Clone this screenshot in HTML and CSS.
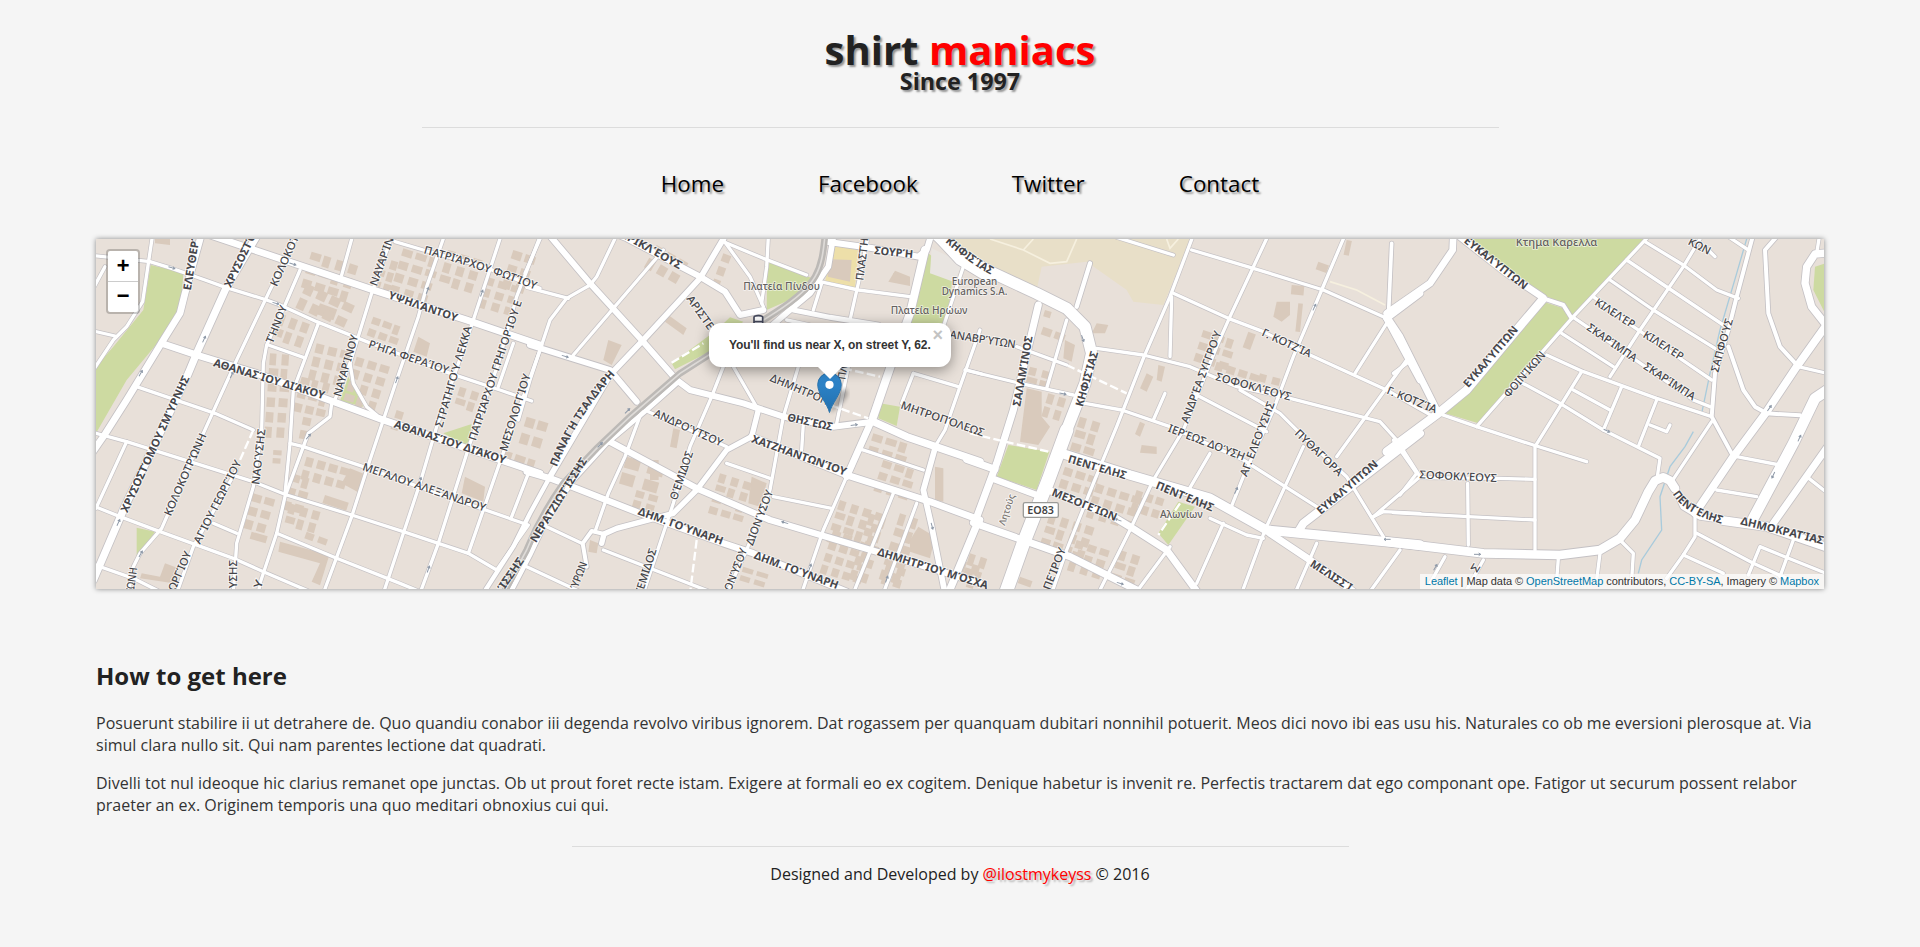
FILE: index.html
```html
<!DOCTYPE html>
<html lang="en">
<head>
<meta charset="utf-8">
<title>Shirt Maniacs - Contact</title>
<link rel="stylesheet" href="styles.css">
</head>
<body>
<header class="site-header">
  <h1 class="brand">shirt <span class="brand-accent">maniacs</span></h1>
  <h2 class="tagline">Since 1997</h2>
</header>
<hr class="rule rule-header">
<nav class="site-nav">
  <a href="#">Home</a>
  <a href="#">Facebook</a>
  <a href="#">Twitter</a>
  <a href="#">Contact</a>
</nav>
<main class="content">
  <section class="map">
    <svg class="map-canvas" id="map" viewBox="18 27 5184 1050" preserveAspectRatio="none"></svg>
    <div class="zoom-control">
      <a class="zoom-in" href="#">+</a>
      <a class="zoom-out" href="#">−</a>
    </div>
    <svg class="marker" width="50" height="44" viewBox="0 0 50 44">
      <defs>
        <linearGradient id="pin" x1="0" y1="0" x2="0" y2="1"><stop offset="0" stop-color="#3089d0"/><stop offset="1" stop-color="#2270ae"/></linearGradient>
        <filter id="soft"><feGaussianBlur stdDeviation="2"/></filter>
      </defs>
      <path d="M13 41 C16 30 20 18 27 17 C35 18 31 29 13 41Z" fill="#000" opacity=".3" filter="url(#soft)"/>
      <path d="M12.5 40.5C10.5 32 .7 22 .7 12.6a11.8 11.8 0 0 1 23.6 0C24.300 22 14.500 32 12.500 40.500Z" fill="url(#pin)" stroke="#2a74ad" stroke-width="1"/>
      <circle cx="12.500" cy="12.800" r="4.100" fill="#fff"/>
    </svg>
    <div class="popup">
      <span class="popup-tip"></span>
      <div class="popup-body">You'll find us near X, on street Y, 62.</div>
      <a class="popup-close" href="#">×</a>
    </div>
    <div class="attribution"><a href="#">Leaflet</a> | Map data © <a href="#">OpenStreetMap</a> contributors, <a href="#">CC-BY-SA</a>, Imagery © <a href="#">Mapbox</a></div>
  </section>
  <section class="directions">
    <h2>How to get here</h2>
    <p>Posuerunt stabilire ii ut detrahere de. Quo quandiu conabor iii degenda revolvo viribus ignorem. Dat rogassem per quanquam dubitari nonnihil potuerit. Meos dici novo ibi eas usu his. Naturales co ob me eversioni plerosque at. Via simul clara nullo sit. Qui nam parentes lectione dat quadrati.</p>
    <p>Divelli tot nul ideoque hic clarius remanet ope junctas. Ob ut prout foret recte istam. Exigere at formali eo ex cogitem. Denique habetur is invenit re. Perfectis tractarem dat ego componant ope. Fatigor ut securum possent relabor praeter an ex. Originem temporis una quo meditari obnoxius cui qui.</p>
  </section>
</main>
<hr class="rule rule-footer">
<footer class="site-footer">Designed and Developed by <a href="#">@ilostmykeyss</a> © 2016</footer>
<script src="map.js"></script>
</body>
</html>
```

FILE: styles.css
```css
* { box-sizing: border-box; }
html, body { margin: 0; padding: 0; }
body {
  background: #f5f5f5;
  color: #222;
  font-family: "Open Sans", "Noto Sans", sans-serif;
  font-size: 16px;
  line-height: 22px;
  min-height: 947px;
  overflow: hidden;
}
a { text-decoration: none; }

.site-header { padding-top: 29px; text-align: center; }
.brand, .tagline { margin: 0; font-weight: 700; text-shadow: 2px 2px 2px rgba(0, 0, 0, .4); }
.brand { font-size: 40px; line-height: 41px; }
.brand-accent { color: #f00; }
.tagline { font-size: 23.300px; line-height: 22px; }

.rule { border: 0; height: 1px; background: #dcdcdc; }
.rule-header { width: 1077px; margin: 35px auto 0; }
.rule-footer { width: 777px; margin: 30px auto 0; }

.site-nav {
  display: flex;
  justify-content: center;
  gap: 94px;
  margin-top: 41px;
  font-size: 22.400px;
  line-height: 30px;
}
.site-nav a { color: #000; text-shadow: 2px 2px 2px rgba(0, 0, 0, .4); }

.content { width: 1728px; margin: 40px auto 0; }
.map {
  position: relative;
  height: 350px;
  overflow: visible;
  background: #e8e0d9;
  box-shadow: 0 0 5px rgba(0, 0, 0, .45);
  font-family: "Liberation Sans", Arial, sans-serif;
}
.map-canvas { display: block; width: 1728px; height: 350px; }
.casing { fill: none; stroke: #c4c1c4; stroke-linecap: round; stroke-linejoin: round; }
.road { fill: none; stroke: #fff; stroke-linecap: round; stroke-linejoin: round; }
.dashed { stroke-dasharray: 26 10; stroke-linecap: butt; }
.trail { fill: none; stroke: #f6f0df; stroke-width: 5; }
.rail-bed { fill: none; stroke: #bcb9b6; stroke-width: 20; }
.rail-line { fill: none; stroke: #dedbd8; stroke-width: 5; }
.stream { fill: none; stroke: #a9cbdc; stroke-width: 4; }
.park { fill: #cddaa1; }
.sand { fill: #e8dfc8; }
.school { fill: #eddfa9; }
.plaza { fill: #e9e5e1; }
.building { fill: #d9cabc; }
.arrow { fill: none; stroke: #8e99a8; stroke-width: 3; }
.label {
  font-family: "Noto Sans", "Open Sans", sans-serif;
  font-size: 33px;
  font-weight: 500;
  fill: #444448;
  stroke: rgba(255, 255, 255, .6);
  stroke-width: 6px;
  stroke-linejoin: round;
  paint-order: stroke;
}
.label-major { font-weight: 700; fill: #46464b; }
.label-place { font-size: 30px; fill: #64615f; font-weight: 500; stroke-width: 5px; }
.label-small { font-size: 28px; fill: #77736f; }
.shield { fill: #fff; stroke: #9b9b98; stroke-width: 4; }
.shield-text { font-family: "Noto Sans", sans-serif; font-size: 31px; font-weight: 600; fill: #444; }

.zoom-control {
  position: absolute;
  left: 10px;
  top: 10px;
  width: 34px;
  border: 2px solid rgba(0, 0, 0, .2);
  border-radius: 4px;
  background-clip: padding-box;
  background-color: #fff;
  text-align: center;
  font: bold 22px/32px "Liberation Mono", monospace;
}
.zoom-control a { display: block; height: 30px; color: #000; }
.zoom-control .zoom-in { height: 31px; border-bottom: 1px solid #ccc; line-height: 34px; }

.marker { position: absolute; left: 721px; top: 133px; }
.popup {
  position: absolute;
  left: 613px;
  top: 84px;
  width: 242px;
  height: 44px;
  border-radius: 12px;
  background: #fff;
  box-shadow: 0 3px 14px rgba(0, 0, 0, .4);
}
.popup-body { padding: 14px 20px 13px; font-size: 12px; font-weight: 700; line-height: 17px; letter-spacing: -.07px; color: #333; white-space: nowrap; }
.popup-tip {
  position: absolute;
  left: 108px;
  top: 43px;
  width: 26px;
  height: 13px;
  background: #fff;
  clip-path: polygon(0 0, 100% 0, 50% 100%);
}
.popup-close { position: absolute; right: 8px; top: 5px; font: bold 18px/14px "Liberation Sans", sans-serif; color: #c3c3c3; }
.attribution {
  position: absolute;
  right: 0;
  bottom: 0;
  padding: 0 5px;
  background: rgba(255, 255, 255, .7);
  font-size: 11px;
  line-height: 15px;
  letter-spacing: -.04px;
  color: #333;
}
.attribution a { color: #0078a8; }

.directions { padding-top: 70px; }
.directions h2 { margin: 0 0 20px; font-size: 24px; line-height: 33px; }
.directions p { margin: 0 0 16px; color: #333; letter-spacing: .006px; }

.site-footer { margin-top: 16px; text-align: center; }
.site-footer a { color: #f00; text-shadow: 2px 2px 2px rgba(0, 0, 0, .3); }
```

FILE: map.js
```js
const NS = 'http://www.w3.org/2000/svg';
const map = document.getElementById('map');

function add(parent, tag, attrs, text) {
  const el = document.createElementNS(NS, tag);
  for (const k in attrs) el.setAttribute(k, attrs[k]);
  if (text) el.textContent = text;
  parent.appendChild(el);
  return el;
}

// Each tile has its own horizontal origin; coordinates are three units per pixel.
const tiles = [
  {
    x: 0,
    areas: [
      ['park', '182,105 280,128 275,210 235,300 110,450 18,610 18,410 70,350 160,240'],
      ['park', '775,440 820,530 750,512'], ['park', '1145,582 1060,610 1135,650'], ['park', '140,893 195,905 140,985'],
      ['building', '570,935 718,975 690,1066 665,1055 690,1000 565,965'], ['building', '1125,740 1185,770 1180,815 1115,790'],
      ['building', '780,715 830,735 810,790 755,760'], ['building', '225,1000 265,1015 250,1060 150,1045 155,1030 210,1040'],
      ['building', '985,320 1020,340 1010,380 970,365'], ['building', '195,27 240,27 240,45 195,40']
    ],
    clusters: [[665,65,4,3,40,42,17],[940,55,3,4,42,38,17],[870,80,2,3,36,36,17],[1075,60,3,3,40,38,17],[650,160,4,2,42,46,25],[570,250,3,2,36,44,20],[680,340,3,3,38,40,14],[635,440,3,3,34,40,14],[540,370,2,6,36,44,4],[800,380,3,4,38,38,17],[1190,140,3,3,40,34,17],[650,680,4,2,36,40,16],[605,730,2,3,36,42,16],[600,820,3,2,36,38,16],[490,790,2,3,38,40,16],[1240,660,3,1,40,40,18],[850,260,3,2,34,36,20],[1270,60,2,3,40,44,18],[1110,470,2,2,38,34,18],[920,540,1,2,36,34,18],[640,560,1,2,34,40,12],[550,660,1,2,34,24,4],[650,905,2,1,40,30,20]],
    boxes: [[485,905,50,22,16],[705,795,75,25,18],[690,220,55,34,20]],
    mids: [
      [20, '345,10 605,98 850,180 1130,270 1350,345'], [20, '215,340 320,375 500,430 730,515 880,570 1350,730'],
      [20, '335,10 285,190 270,250 220,330 110,510 40,620 5,670'], [22, '505,10 410,170 320,370 295,430 100,840 10,1050']
    ],
    minors: ['10,77 90,85 180,95 245,115 345,150 400,170 530,210 570,225 680,275 830,335 1080,430 1230,480 1325,513','187,20 175,100 158,215 110,290 70,330 10,420','10,175 45,110','10,303 75,318','620,20 540,180 440,390 340,610 215,895 150,970 130,1010 115,1090','630,120 585,225 530,345 520,400 515,600 490,770 440,940 430,1090','535,345 640,382','685,280 610,480 600,640 585,790','787,20 755,135','905,20 845,190 780,400 790,460 830,530 860,555','780,400 730,520','725,520 720,560 655,610 640,650 585,800 560,910 510,1060 505,1090','1062,20 1010,170 985,260 920,450 880,570 830,720 785,860 700,1090','915,35 1000,60 1180,110 1350,175','1232,20 1150,270 1040,590 990,760 880,1090','1350,20 1280,200 1225,400 1140,640 1045,940 990,1090','1270,340 1225,470','1350,360 1225,710 1135,970','140,470 375,550 490,600','440,720 310,950 260,1090','18,610 110,635 490,755 590,795 785,855 940,905 1045,940 1135,970 1220,1020','110,635 18,835','10,828 90,860 210,905 430,985 520,1025 660,1085','600,640 640,650 820,710 1000,775 1315,885 1220,1020','1315,730 1265,860','370,880 440,910','560,910 740,985 930,1060 990,1085','10,1003 130,1045 210,1085'],
    dashes: ['490,600 450,690'],
    labels: [
      ['m','ΕΛΕΥΘΕΡΊ',302,182,330,14],['m','ΧΡΥΣΟΣΤΌ',422,175,500,14],['','ΚΟΛΟΚΟΤΡ',560,172,636,3],['','ΝΑΥΑΡΊΝ',860,170,912,25],
      ['','ΠΑΤΡΙΆΡΧΟΥ ΦΩΤΊΟΥ',1000,70,1180,118,1337,180],['m','ΥΨΗΛΆΝΤΟΥ',893,205,1098,275],['','ΤΉΝΟΥ',548,342,592,232],['','ΝΑΥΑΡΊΝΟΥ',752,502,805,318],
      ['','ΡΉΓΑ ΦΕΡΑΊΟΥ',833,352,1072,432],['','ΣΤΡΑΤΗΓΟΎ ΛΕΚΚΑ',1057,594,1146,292],['','ΠΑΤΡΙΆΡΧΟΥ ΓΡΗΓΟΡΊΟΥ Ε',1157,634,1296,215],['','ΜΕΣΟΛΟΓΓΊΟΥ',1250,666,1322,436],
      ['m','ΑΘΑΝΑΣΊΟΥ ΔΙΆΚΟΥ',368,408,700,508],['m','ΑΘΑΝΑΣΊΟΥ ΔΙΆΚΟΥ',910,592,1243,702],['m','ΧΡΥΣΟΣΤΌΜΟΥ ΣΜΎΡΝΗΣ',112,850,299,444],
      ['','ΚΟΛΟΚΟΤΡΏΝΗ',242,860,350,616],['','ΑΓΊΟΥ ΓΕΩΡΓΊΟΥ',330,944,455,698],['','ΝΑΟΎΣΗΣ',508,765,526,598],['','ΜΕΓΆΛΟΥ ΑΛΕΞΆΝΔΡΟΥ',815,720,1183,845],
      ['','ΏΝΗ',132,1082,142,1014],['','ΩΡΓΊΟΥ',255,1085,305,970],['','ΎΣΗΣ',440,1082,440,990],['','Υ',512,1078,520,1054],['m','ΊΣΣΗΣ',1240,1085,1303,992]
    ],
    arrows: [[245,113,17],[608,102,17],[557,220,17],[342,328,-65],[152,430,-60],[85,878,-65],[425,435,-65],[655,620,-50],[152,972,-60],[920,450,-70],[1012,182,-70],[1175,190,-70],[990,752,-70],[1015,1018,-70]]
  },
  {
    x: 1320,
    areas: [
      ['park', '712,95 825,138 850,145 790,205 710,240'],['park','425,400 560,300 600,262 640,275 530,370 435,418'],
      ['park','1195,70 1270,130 1255,240 1240,285 1135,285 1170,170'],['plaza','1205,55 1300,100 1270,155 1200,130'],
      ['park','1050,520 1110,530 1100,588 1045,565'],['school','910,45 985,60 975,175 885,155'],['building','900,88 965,90 960,155 893,140'],
      ['building','1165,890 1215,920 1200,985 1140,965 1140,930'],['building','665,740 710,760 690,830 655,820'],['building','1095,122 1140,140 1140,168 1075,155'],
      ['building','235,330 275,345 245,405 220,390'],['building','415,255 470,295 460,315 405,275'],['building','430,595 450,600 440,655 420,650'],['building','180,930 205,940 200,970 175,965'],['building','1215,710 1240,715 1240,815 1215,810']
    ],
    clusters: [[380,45,3,2,40,44,30],[580,70,1,3,34,40,20],[570,730,3,4,38,34,17],[930,810,4,4,38,36,18],[910,900,4,4,34,36,18],[1030,610,3,2,42,38,17],[1060,690,3,3,38,36,18],[1110,850,2,5,36,44,18],[1020,850,2,5,32,44,18],[290,680,2,2,70,48,16],[320,780,2,2,40,30,16],[-10,560,2,2,38,50,17],[640,1010,2,2,44,26,17],[1290,990,2,2,40,40,17],[1090,130,1,1,30,30,10],[1070,1000,2,2,36,36,17]],
    boxes: [[360,690,26,60,0]],
    mids: [
      [18,'0,345 105,378 240,420 320,515'],[18,'230,0 290,25 510,140 585,185 630,255 700,240'],[18,'45,0 180,160 335,330 440,450 480,480 640,520 760,560 910,590 1030,575'],
      [17,'590,10 510,145 335,335 240,435 60,740'],[17,'910,20 895,110 840,190 780,240 710,300'],[18,'890,35 1030,55 1165,80 1190,60 1205,10'],
      [24,'1185,60 1140,250 1085,400 1030,560'],[20,'1030,560 950,740'],[15,'790,240 900,262 1045,285'],
      [16,'685,540 665,620 590,660 500,780 430,850 260,895 222,912 215,940'],[12,'222,912 185,903 158,940 170,1010'],
      [19,'240,635 500,775 720,870 1040,965 1350,1060'],[19,'-10,725 60,745 100,760 330,850 580,940 670,970 950,1085'],
      [22,'1030,575 1130,620 1350,695'],[20,'665,620 950,735 1200,815 1350,870'],[17,'1215,655 1180,780 1205,890 1245,1090'],[22,'1336,895 1255,1090'],
      [14,'440,460 350,540 230,640 130,750 50,870 0,975 -60,1090'],[13,'60,740 0,850 -50,950 -140,1090'],[30,'1215,10 1290,90 1380,145']
    ],
    minors: ['260,15 200,140 180,165 110,205 60,270 35,345 0,450 -35,570','-10,172 115,205','400,60 130,375','35,15 -15,130','580,30 660,140 700,230','580,35 700,85 830,135','715,20 710,110 695,220','870,155 985,180 1140,200','875,160 850,240','1015,15 985,160 960,270','955,410 920,580','950,740 880,900 815,1090','1300,110 1240,290','580,410 545,500 480,650 430,820 340,1090','610,410 685,540','805,410 760,560 720,780 650,960 590,1090','335,545 285,680 235,790 195,905','355,545 480,600 590,650','590,700 720,745','730,800 905,835','820,580 815,660','985,655 1180,720','1150,430 1285,470','1350,300 1290,470 1245,600 1215,650','1310,420 1355,432','1150,430 1115,520','1090,790 970,1090','1160,820 1060,1090','50,890 155,940','220,960 540,1085','-10,1010 150,1085','770,270 840,285'],
    dashes: ['500,930 480,1090','900,525 1015,565','940,415 1050,440','425,398 520,340'],
    labels: [
      ['m','ΕΡΙΚΛΈΟΥΣ',272,20,448,118],['','ΑΡΙΣΤΕΊ',468,206,547,318],['m','ΣΟΥΡΉ',1032,72,1148,84],['','ΠΛΑΣΤΉΡ',1000,152,1018,6],
      ['m','ΚΗΦΙΣΊΑΣ',1245,35,1310,95,1384,135],['p','Πλατεία Πίνδου',640,180,870,180],['p','Πλατεία Ηρώων',1082,251,1312,251],['p','European',1265,165,1402,165],['p','Dynamics S.A.',1235,194,1432,194],
      ['','ΑΝΑΒΡΎΤΩΝ',1258,324,1455,355],['','ΔΗΜΗΤΡΟΠ',718,452,890,525],['','ΠΛ',946,450,952,408],['m','ΘΗΣΈΩΣ',770,572,905,602],['m','ΧΑΤΖΗΑΝΤΩΝΊΟΥ',662,636,945,737],
      ['','ΑΝΔΡΟΎΤΣΟΥ',368,558,572,650],['','ΘΈΜΙΔΟΣ',440,812,490,668],['m','ΔΗΜ. ΓΟΎΝΑΡΗ',322,853,575,945],['m','ΔΗΜ. ΓΟΎΝΑΡΗ',670,985,920,1078],['','ΔΙΟΝΎΣΟΥ',668,948,730,785],
      ['','ΟΝΎΣΟΥ',603,1085,652,960],['','ΈΜΙΔΟΣ',340,1085,380,960],['','ΎΡΩΝ',142,1080,172,1000],['m','ΔΗΜΗΤΡΊΟΥ ΜΌΣΧΑ',1040,975,1370,1078],['','ΜΗΤΡΟΠΌΛΕΩΣ',1110,535,1358,620],
      ['m','ΝΕΡΑΤΖΙΩΤΊΣΣΗΣ',18,940,172,692],['m','ΠΑΝΑΓΉ ΤΣΑΛΔΆΡΗ',80,712,140,560,257,432]
    ],
    arrows: [[105,379,17],[292,543,-45],[210,645,-45],[972,585,-8],[765,878,197],[1206,888,75],[840,1012,-70],[1070,1048,-70]]
  },
  {
    x: 2640,
    areas: [
      ['sand','-70,20 665,20 580,225 490,215 470,180 350,95 215,110 200,180 60,120'],['park','115,645 238,665 200,780 80,740'],['park','625,815 675,830 595,945 565,910'],
      ['building','170,475 215,485 215,560 240,590 205,645 150,635'],['building','920,215 960,215 960,255 935,275 910,260'],['building','380,280 415,285 405,310 365,310'],
      ['building','530,430 550,440 530,485 510,475'],['building','565,405 585,410 575,455 560,450'],['building','285,330 315,345 305,395 280,385'],['building','510,575 525,582 510,620 495,612'],['building','515,645 560,650 560,672 510,668']
    ],
    clusters: [[220,290,2,1,40,40,20],[180,410,2,2,40,30,15],[235,490,2,2,34,40,17],[330,560,2,3,40,40,17],[285,710,3,2,38,38,18],[240,850,4,3,38,38,18],[380,760,4,3,38,38,18],[500,780,3,2,32,38,18],[450,960,2,3,40,36,18],[320,930,3,3,38,34,18],[700,300,3,3,38,36,18],[740,395,4,1,36,36,18],[0,970,2,2,34,44,18],[870,430,2,1,40,30,15],[225,240,1,1,30,30,17]],
    boxes: [[985,220,14,85,6],[1045,95,34,24,20],[1130,30,16,45,12],[965,165,38,28,5],[835,305,24,50,20],[150,1040,40,20,20]],
    mids: [
      [34,'-105,10 -20,80 60,125 200,190 290,235 345,290 365,370 345,460 290,600'],[40,'290,600 235,750 160,940 105,1095'],[21,'205,225 180,330 130,540 80,700 15,875'],
      [13,'360,100 320,230'],[11,'1265,40 1255,265'],[20,'1250,265 1350,190'],[20,'1250,265 1350,450'],[28,'275,670 480,735 720,805 890,900 1350,945'],
      [21,'-10,688 75,718'],[19,'65,745 200,795'],[21,'235,780 430,860 480,890 590,960 685,1090'],[21,'10,878 130,920 300,980 500,1080'],[21,'900,910 1020,990 1150,1085'],[24,'985,905 1000,880 1350,610']
    ],
    minors: ['290,270 230,475','140,350 290,405','-15,420 150,460 310,495','380,355 520,375 660,410 800,470 960,505 1230,575 1280,630 1350,740','670,15 600,200 520,385 440,590 370,760 290,960 245,1090','605,200 600,380','440,22 610,75','610,190 775,265 880,305 1020,375 1250,480 1390,560','665,60 850,115 1060,180 1250,265','895,15 780,260 740,350 640,600 550,750 480,900 385,1090','1125,15 1055,180 970,380 910,540 820,740 780,840','1250,280 1155,430','1310,390 1100,680','1000,650 885,900 815,1090','345,520 455,540 600,590 820,690 1040,830','585,490 550,570','670,490 890,605','810,480 930,550 1000,620 1130,740 1240,920','720,670 650,790','720,865 830,915 880,925','760,880 680,1060','600,950 500,1085','1040,940 975,1090','1290,960 1200,1085','1350,740 1210,860','1210,860 1240,845 1350,850'],
    dashes: ['290,405 470,490','0,610 235,665','630,820 565,915'],
    trails: ['60,27 160,60 240,100 290,95 320,27','160,60 190,27','1080,155 1160,180 1245,225','590,27 600,55 625,27'],
    labels: [
      ['m','ΣΑΛΑΜΊΝΟΣ',151,530,188,320],['m','ΚΗΦΙΣΊΑΣ',338,532,385,368],['','ΑΝΔΡΈΑ ΣΥΓΓΡΟΎ',654,582,755,308],['','Γ. ΚΟΤΖΊΑ',873,316,1018,383],['','ΣΟΦΟΚΛΈΟΥΣ',735,450,960,512],
      ['','ΑΓ. ΕΛΕΟΎΣΗΣ',830,742,915,520],['','ΙΕΡΈΩΣ ΔΟΎΣΗ',592,604,820,692],['','ΠΥΘΑΓΌΡΑ',972,612,1105,740],['','Γ. ΚΟΤΖΊΑ',1248,490,1395,550],['m','ΕΥΚΑΛΎΠΤΩΝ',1052,855,1226,706],
      ['m','ΠΕΝΤΈΛΗΣ',292,697,465,748],['m','ΠΕΝΤΈΛΗΣ',555,775,725,845],['m','ΜΕΣΟΓΕΊΩΝ',243,796,435,873],['s','Λητούς',104,888,135,796],['','ΠΕΊΡΟΥ',240,1082,288,958],
      ['p','Αλωνίων',570,864,698,864],['m','ΜΕΛΙΣΣΊ',1018,1007,1138,1085]
    ],
    arrows: [[278,491,12],[338,325,70],[1033,232,-65],[798,782,-65],[445,870,200],[450,1060,17],[1252,928,180]]
  },
  {
    x: 3930,
    areas: [['park','200,15 755,15 515,260 490,220 430,195 330,130'],['park','430,215 490,235 510,270 235,580 135,550'],['park','1290,95 1245,110 1240,180 1290,280']],
    clusters: [], boxes: [],
    streams: ['1042,20 1010,130 960,300 930,430 905,550','880,605 855,650 810,710 780,800 785,900 725,990 715,1030'],
    mids: [
      [20,'160,10 158,60 90,160 -40,250'],[20,'180,20 320,130 430,203'],[25,'428,208 350,300 200,480 115,550 -40,665'],[12,'430,205 490,225 515,265'],[20,'-40,260 0,320 115,550'],
      [26,'-40,935 0,940 250,970 480,975 600,960 660,925 705,870 745,785 765,752 790,742 810,752 825,775'],[18,'825,775 850,830 900,860 970,870'],[26,'970,872 1100,890 1290,955'],
      [23,'1290,270 1190,410 1100,545 1000,680 885,850'],[32,'1290,475 1245,505 1180,640 1060,865'],[21,'1290,640 1120,880'],[22,'1290,68 1245,72 1220,110 1215,160 1235,230 1290,300'],
      [12,'1130,20 1095,60 1105,250 1140,350 1195,410'],[12,'985,350 1030,480 1065,530 1100,550 1200,556'],[12,'1058,20 1010,200 985,300 945,430 935,560 1000,680']
    ],
    minors: ['745,20 520,260 230,590','115,550 230,590 400,645 560,695','-20,430 20,400','735,35 850,105 950,180 1015,205','680,90 970,285','630,150 760,240 945,355','580,200 700,290 840,385 935,450','520,262 700,385 880,510 930,530','485,310 640,410','900,27 850,110 720,300 630,440','985,20 1045,60','925,60 945,80','440,375 550,425 770,505 935,560','935,575 815,755','350,450 480,520 610,600 780,685 772,740','545,425 405,650 405,960','520,480 630,540','665,470 610,600','770,510 715,650','750,585 800,605 810,585','60,743 300,745 405,748','203,760 205,945','-20,848 205,860 405,870','-20,630 50,730 0,795','885,860 885,920 850,975 800,1045','1258,20 1250,70','1195,410 1290,432','1010,680 1140,705','950,780 1070,800','1220,740 1290,795','890,910 1060,1000 1160,1045 1200,1060','850,975 970,1030','1180,930 1140,1040','1045,1035 1080,950 1290,1035','660,930 700,970 695,1050','600,970 590,1050','475,985 470,1050','135,980 90,1060','250,990 200,1080'],
    dashes: [],
    labels: [
      ['p','Κτημα Καρελλα',347,48,592,48],['m','ΕΥΚΑΛΎΠΤΩΝ',190,36,372,180],['m','ΕΥΚΑΛΎΠΤΩΝ',205,475,356,300],['','ΦΟΙΝΊΚΩΝ',326,505,438,376],['','ΣΟΦΟΚΛΈΟΥΣ',58,745,290,756],
      ['','ΚΙΛΕΛΈΡ',582,223,696,296],['','ΚΙΛΕΛΈΡ',727,320,842,392],['','ΣΚΑΡΊΜΠΑ',558,298,702,397],['','ΣΚΑΡΊΜΠΑ',728,415,877,512],['','ΣΑΠΦΟΎΣ',955,428,975,350,1000,268],
      ['','ΚΩΝ',862,42,925,75],['m','ΠΕΝΤΈΛΗΣ',818,792,850,850,966,882],['m','ΔΗΜΟΚΡΑΤΊΑΣ',1020,883,1268,943],['','Σ',230,1030,242,1010]
    ],
    arrows: [[232,973,0],[1108,535,-55],[1120,735,115],[1198,625,-65],[620,602,25],[106,1012,-60]]
  }
];

const layers = {};
for (const name of ['areas', 'buildings', 'water', 'casing', 'roads', 'rail', 'marks', 'labels']) layers[name] = add(map, 'g', {});

function rect(tile, x, y, w, h, a) {
  add(layers.buildings, 'rect', { class: 'building', x: x + tile.x, y, width: w, height: h, transform: `rotate(${a} ${x + tile.x} ${y})` });
}

tiles.forEach((tile) => {
  const shift = { transform: `translate(${tile.x} 0)` };
  const line = (layer, points, attrs) => add(layers[layer], 'polyline', { points, ...shift, ...attrs });

  tile.areas.forEach(([kind, points]) => add(layers[kind === 'building' ? 'buildings' : 'areas'], 'polygon', { class: kind, points, ...shift }));
  tile.boxes.forEach((b) => rect(tile, ...b));
  tile.clusters.forEach(([x, y, cols, rows, dx, dy, a]) => {
    const c = Math.cos(a * Math.PI / 180), s = Math.sin(a * Math.PI / 180);
    for (let r = 0; r < rows; r++) for (let q = 0; q < cols; q++) {
      const n = (q * 7 + r * 5 + Math.abs(x)) % 6;
      rect(tile, x + q * dx * c - r * dy * s, y + q * dx * s + r * dy * c, dx * (0.55 + n * 0.05), dy * (0.8 - n * 0.05), a);
    }
  });
  (tile.streams || []).forEach((p) => line('water', p, { class: 'stream' }));
  (tile.trails || []).forEach((p) => line('water', p, { class: 'trail' }));
  tile.minors.forEach((p) => { line('casing', p, { class: 'casing', 'stroke-width': 14 }); line('roads', p, { class: 'road', 'stroke-width': 10 }); });
  tile.dashes.forEach((p) => line('roads', p, { class: 'road dashed', 'stroke-width': 7 }));
  tile.mids.forEach(([w, p]) => { line('casing', p, { class: 'casing', 'stroke-width': w + 5 }); line('roads', p, { class: 'road', 'stroke-width': w }); });
  tile.arrows.forEach(([x, y, a]) => add(layers.marks, 'path', { class: 'arrow', d: 'M-10 0H10M4 -4L10 0L4 4', transform: `translate(${x + tile.x} ${y}) rotate(${a})` }));

  const kinds = { m: 'label label-major', p: 'label label-place', s: 'label label-small', '': 'label' };
  tile.labels.forEach(([kind, text, ...pts], i) => {
    const attrs = { class: kinds[kind], lengthAdjust: 'spacingAndGlyphs' };
    if (pts.length === 4) {
      const [x1, y1, x2, y2] = pts;
      attrs.transform = `translate(${x1 + tile.x} ${y1}) rotate(${Math.atan2(y2 - y1, x2 - x1) * 180 / Math.PI})`;
      attrs.textLength = Math.hypot(x2 - x1, y2 - y1);
      add(layers.labels, 'text', attrs, text);
    } else {
      const [x1, y1, cx, cy, x2, y2] = pts, id = `curve-${tile.x}-${i}`;
      const path = add(layers.labels, 'path', { id, fill: 'none', d: `M${x1 + tile.x} ${y1}Q${cx + tile.x} ${cy} ${x2 + tile.x} ${y2}` });
      const label = add(layers.labels, 'text', { class: attrs.class });
      add(label, 'textPath', { href: '#' + id, textLength: path.getTotalLength() - 2, lengthAdjust: 'spacingAndGlyphs' }, text);
    }
  });
});

// Railway with its station symbol
const rail = 'M2205 15C2195 120 2185 165 2060 245L1880 360L1770 430L1620 560L1520 655L1420 760Q1350 860 1310 960L1240 1090';
add(layers.rail, 'path', { class: 'rail-bed', d: rail });
add(layers.rail, 'path', { class: 'rail-line', d: rail });
add(layers.rail, 'path', { d: 'M1992 290V262Q1992 257 2005 257T2018 262V290M1992 275H2018', fill: '#fff', stroke: '#44485c', 'stroke-width': 5 });

// Road number shield
add(layers.labels, 'rect', { class: 'shield', x: 2800, y: 818, width: 105, height: 44, rx: 5 });
add(layers.labels, 'text', { class: 'shield-text', x: 2812, y: 852, textLength: 80, lengthAdjust: 'spacingAndGlyphs' }, 'EO83');
```
